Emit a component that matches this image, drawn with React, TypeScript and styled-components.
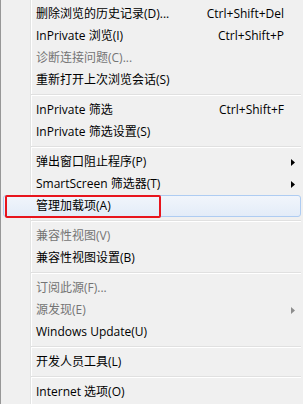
import React from "react";
import styled, { createGlobalStyle } from "styled-components";

const GlobalStyle = createGlobalStyle`
  html, body { margin: 0; padding: 0; background: #f0f0f0; }
  body { width: 303px; height: 404px; overflow: hidden; }
`;

const Menu = styled.div`
  position: relative;
  box-sizing: border-box;
  width: 303px;
  height: 404px;
  padding: 3px 2px 0 2px;
  border-left: 1px solid #979797;
  background-color: #f0f0f0;
  background-image: linear-gradient(
    to right,
    transparent 29px,
    #e2e3e3 29px,
    #e2e3e3 30px,
    #ffffff 30px,
    #ffffff 31px,
    transparent 31px
  );
  font-family: "Open Sans", "Noto Sans CJK SC", sans-serif;
  font-size: 12px;
  color: #000;
  display: flex;
  flex-direction: column;
`;

const Item = styled.div<{ $disabled?: boolean; $hover?: boolean }>`
  position: relative;
  box-sizing: border-box;
  height: 22px;
  display: grid;
  grid-template-columns: 1fr auto 16px;
  align-items: center;
  padding: 0 0 0 32px;
  border: 1px solid ${(p) => (p.$hover ? "#aeccf2" : "transparent")};
  border-radius: 3px;
  background: ${(p) =>
    p.$hover ? "linear-gradient(#f1f5fb, #e3ecf8)" : "transparent"};
  color: ${(p) => (p.$disabled ? "#747474" : "#000")};
  white-space: nowrap;
`;

const Label = styled.span`
  line-height: 20px;
`;

const Shortcut = styled.span`
  line-height: 20px;
  text-align: right;
`;

const Arrow = styled.span<{ $disabled?: boolean }>`
  display: flex;
  justify-content: flex-end;
  padding-right: 5px;
  svg { display: block; fill: ${(p) => (p.$disabled ? "#8d8d8d" : "#000")}; }
`;

const Separator = styled.div`
  height: 8px;
  margin-left: 28px;
  display: flex;
  flex-direction: column;
  justify-content: center;
  &::before {
    content: "";
    display: block;
    height: 1px;
    background: #e0e0e0;
  }
  &::after {
    content: "";
    display: block;
    height: 1px;
    background: #ffffff;
  }
`;

const Annotation = styled.div`
  position: absolute;
  left: 1px;
  top: -1px;
  width: 156px;
  height: 23px;
  box-sizing: border-box;
  border: 2px solid #e8141c;
  border-radius: 2px;
  pointer-events: none;
`;

type Entry =
  | { sep: true }
  | {
      sep?: false;
      label: string;
      shortcut?: string;
      disabled?: boolean;
      sub?: boolean;
      hover?: boolean;
    };

const entries: Entry[] = [
  { label: "删除浏览的历史记录(D)...", shortcut: "Ctrl+Shift+Del" },
  { label: "InPrivate 浏览(I)", shortcut: "Ctrl+Shift+P" },
  { label: "诊断连接问题(C)...", disabled: true },
  { label: "重新打开上次浏览会话(S)" },
  { sep: true },
  { label: "InPrivate 筛选", shortcut: "Ctrl+Shift+F" },
  { label: "InPrivate 筛选设置(S)" },
  { sep: true },
  { label: "弹出窗口阻止程序(P)", sub: true },
  { label: "SmartScreen 筛选器(T)", sub: true },
  { label: "管理加载项(A)", hover: true },
  { sep: true },
  { label: "兼容性视图(V)", disabled: true },
  { label: "兼容性视图设置(B)" },
  { sep: true },
  { label: "订阅此源(F)...", disabled: true },
  { label: "源发现(E)", disabled: true, sub: true },
  { label: "Windows Update(U)" },
  { sep: true },
  { label: "开发人员工具(L)" },
  { sep: true },
  { label: "Internet 选项(O)" },
];

const SubArrow = () => (
  <svg width="4" height="7" viewBox="0 0 4 7">
    <path d="M0 0 L4 3.5 L0 7 Z" />
  </svg>
);

export default function App() {
  return (
    <>
      <GlobalStyle />
      <Menu>
        {entries.map((e, i) =>
          e.sep ? (
            <Separator key={i} />
          ) : (
            <Item key={i} $disabled={e.disabled} $hover={e.hover}>
              <Label>{e.label}</Label>
              <Shortcut>{e.shortcut ?? ""}</Shortcut>
              <Arrow $disabled={e.disabled}>{e.sub ? <SubArrow /> : null}</Arrow>
              {e.hover ? <Annotation /> : null}
            </Item>
          )
        )}
      </Menu>
    </>
  );
}
